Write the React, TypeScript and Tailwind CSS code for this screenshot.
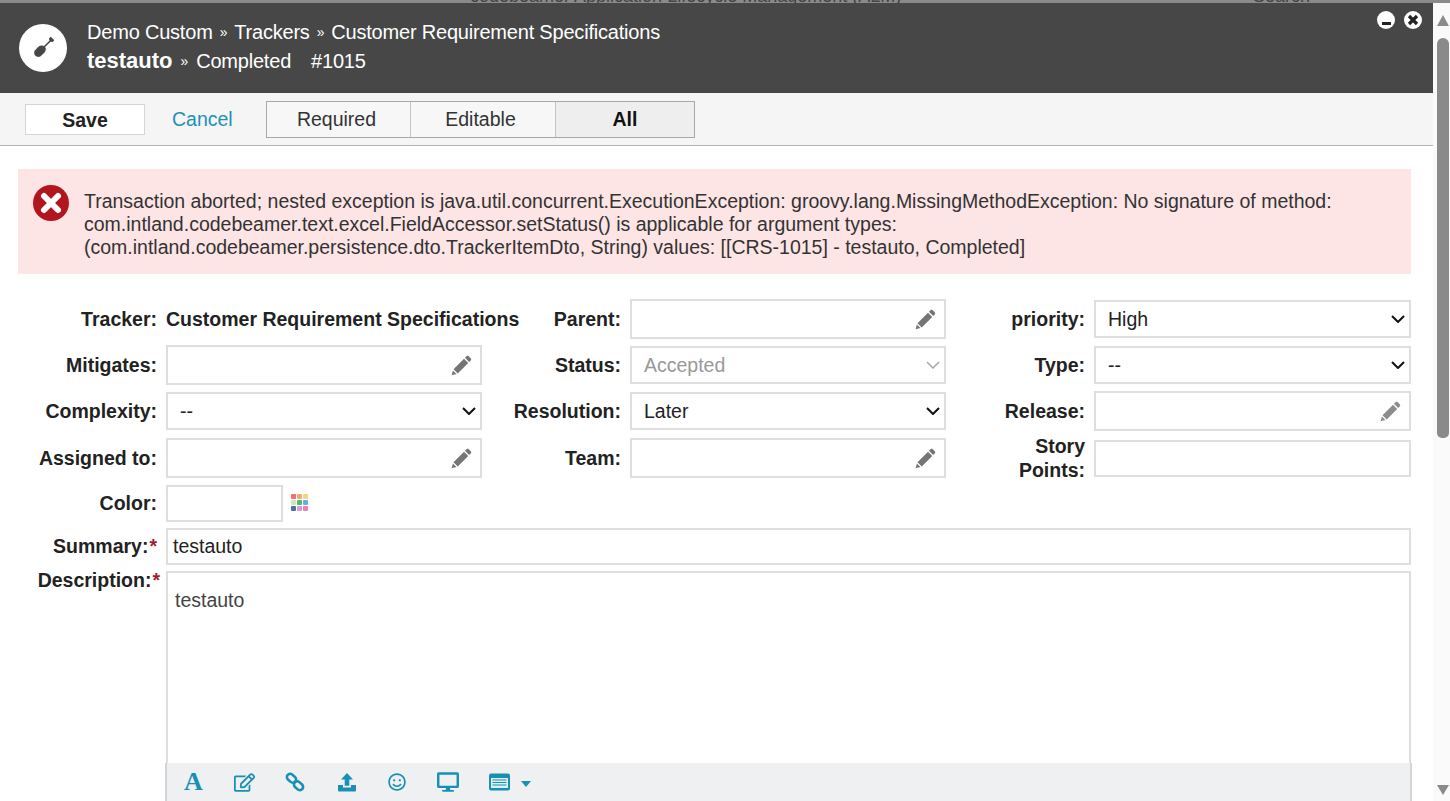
import { ReactNode } from "react";
import { FaDesktop, FaRegEdit, FaRegSmile } from "react-icons/fa";

function PencilIcon({ light }: { light?: boolean }) {
  return (
    <svg viewBox="0 0 20 20" className="h-[21px] w-[21px]">
      <path
        d="M15 1c.5-.4 1.200-.4 1.700 0l2.300 2.300c.4.5.4 1.200 0 1.700l-1.700 1.700-4-4L15 1zM12.400 3.600l4 4L6.400 17.600l-4-4 10-10zM1.800 14.800l3.400 3.400L.6 19.400l1.200-4.600z"
        fill={light ? "#8c8c8c" : "#757575"}
      />
    </svg>
  );
}

function Chevron({ muted }: { muted?: boolean }) {
  return (
    <svg viewBox="0 0 14 8" className="h-[8px] w-[14px]">
      <path d="M1 1l6 6 6-6" fill="none" stroke={muted ? "#a8a8a8" : "#111"} strokeWidth={muted ? 1.5 : 2} />
    </svg>
  );
}

function Label({ children }: { children: ReactNode }) {
  return <div className="self-center pr-[9px] text-right text-[19.5px] font-bold leading-[24px] text-[#222]">{children}</div>;
}

function RefField({ light }: { light?: boolean }) {
  return (
    <div className="flex h-[40px] items-center justify-end self-center border-2 border-[#dedede] bg-white pr-[8px]">
      <PencilIcon light={light} />
    </div>
  );
}

function SelectField({ value, muted }: { value: string; muted?: boolean }) {
  return (
    <div className="flex h-[38px] items-center justify-between self-center border-2 border-[#dedede] bg-white pl-[12px] pr-[4px]">
      <span className={muted ? "pt-[1px] text-[19.5px] text-[#999]" : "pt-[1px] text-[19.5px] text-[#222]"}>{value}</span>
      <Chevron muted={muted} />
    </div>
  );
}

function Swatches() {
  const colors = ["#ef7070", "#f2a86e", "#f2d67a", "#cfe5b8", "#4cbb6c", "#62aee8", "#4f6fa5", "#d59ae0", "#f07cbc"];
  return (
    <div className="grid grid-cols-3 gap-[1px]">
      {colors.map((color) => (
        <div key={color} className="h-[5px] w-[5px] rounded-[1px]" style={{ backgroundColor: color }} />
      ))}
    </div>
  );
}

export default function App() {
  return (
    <div className="flex h-[801px] w-[1450px] flex-col overflow-hidden bg-white font-['Liberation_Sans',Arial,sans-serif]">
      <div className="h-[3px] shrink-0 overflow-hidden bg-[#8a8a8a]">
        <div className="ml-[470px] mt-[-14px] flex justify-between pr-[140px] text-[18px] leading-[20px] text-[#444]">
          <span>codebeamer Application Lifecycle Management (ALM)</span>
          <span>Search</span>
        </div>
      </div>

      <div className="flex min-h-0 flex-1">
        <div className="flex w-[1433px] flex-col">
          <header className="flex h-[90px] shrink-0 items-start justify-between bg-[#474747] text-white">
            <div className="flex">
              <div className="ml-[19px] mt-[21px] flex h-[48px] w-[48px] items-center justify-center rounded-full bg-white">
                <svg viewBox="0 0 24 24" className="h-[34px] w-[34px]">
                  <path d="M17.500 4 20 6.500l-1.200 1.300-1.500-.3-3.800 3.800c.8 1.400.5 2.900-.6 4l-2.600 2.600c-.8.5-2.700.6-3.700-.4s-1-3-.4-3.800l2.500-2.500c1.100-1.100 2.700-1.400 4-.6l3.800-3.800-.3-1.500L17.500 4z" fill="#474747" />
                </svg>
              </div>
              <div className="ml-[20px] flex flex-col">
                <div className="mt-[16px] flex h-[26px] items-center text-[20px] leading-[26px] tracking-[-0.2px]">
                  <span>Demo Custom</span>
                  <span className="mx-[7px] text-[14px]">»</span>
                  <span>Trackers</span>
                  <span className="mx-[7px] text-[14px]">»</span>
                  <span>Customer Requirement Specifications</span>
                </div>
                <div className="mt-[2px] flex h-[28px] items-center text-[20px] leading-[28px] tracking-[-0.2px]">
                  <span className="text-[22px] font-bold tracking-normal">testauto</span>
                  <span className="mx-[8px] text-[14px]">»</span>
                  <span>Completed</span>
                  <span className="ml-[20px]">#1015</span>
                </div>
              </div>
            </div>
            <div className="mr-[11px] mt-[8px] flex gap-[9px]">
              <div className="flex h-[18px] w-[18px] items-end justify-center rounded-full bg-white pb-[4px]">
                <div className="h-[3px] w-[9px] bg-[#222]" />
              </div>
              <div className="flex h-[18px] w-[18px] items-center justify-center rounded-full bg-white">
                <svg viewBox="0 0 12 12" className="h-[12px] w-[12px]">
                  <path d="M2 2l8 8M10 2l-8 8" stroke="#222" strokeWidth="3.200" />
                </svg>
              </div>
            </div>
          </header>

          <div className="flex h-[53px] shrink-0 items-start border-b border-[#b5b5b5] bg-[#f5f5f5] pl-[25px]">
            <button className="mt-[11px] h-[31px] w-[120px] border border-[#d5d5d5] bg-white text-[19.5px] font-bold leading-[24px] text-[#222]">Save</button>
            <span className="ml-[27px] mt-[14px] w-[94px] text-[19.5px] leading-[24px] text-[#2092b4]">Cancel</span>
            <div className="mt-[8px] flex h-[37px] w-[429px] border border-[#a8a8a8] bg-white text-[19.5px] text-[#333]">
              <div className="flex w-[144px] items-center justify-center border-r border-[#c4c4c4] bg-[#f7f7f7] pr-[4px]">Required</div>
              <div className="flex w-[145px] items-center justify-center border-r border-[#c4c4c4] bg-[#f7f7f7] pr-[5px]">Editable</div>
              <div className="flex flex-1 items-center justify-center bg-[#eeeeee] font-bold text-[#111]">All</div>
            </div>
          </div>

          <div className="relative flex min-h-0 flex-1 flex-col overflow-hidden">
            <div className="ml-[18px] mt-[23px] flex h-[105px] w-[1393px] shrink-0 bg-[#fde4e5] pl-[15px]">
              <svg viewBox="0 0 36 36" className="mt-[16px] h-[36px] w-[36px] shrink-0">
                <circle cx="18" cy="18" r="18" fill="#b3151f" />
                <path d="M11 11l14 14M25 11L11 25" stroke="#fff" strokeWidth="6" strokeLinecap="round" />
              </svg>
              <p className="ml-[15px] mt-[21px] whitespace-nowrap text-[19.5px] leading-[23px] text-[#333]">
                Transaction aborted; nested exception is java.util.concurrent.ExecutionException: groovy.lang.MissingMethodException: No signature of method:
                <br />
                com.intland.codebeamer.text.excel.FieldAccessor.setStatus() is applicable for argument types:
                <br />
                (com.intland.codebeamer.persistence.dto.TrackerItemDto, String) values: [[CRS-1015] - testauto, Completed]
              </p>
            </div>

            <div className="mt-[22px] grid shrink-0 grid-cols-[166px_316px_148px_316px_148px_317px] grid-rows-[46px_46px_46px_48px]">
              <Label>Tracker:</Label>
              <div className="self-center whitespace-nowrap text-[19.5px] font-bold leading-[24px] text-[#222]">Customer Requirement Specifications</div>
              <Label>Parent:</Label>
              <RefField />
              <Label>priority:</Label>
              <SelectField value="High" />

              <Label>Mitigates:</Label>
              <RefField />
              <Label>Status:</Label>
              <SelectField value="Accepted" muted />
              <Label>Type:</Label>
              <SelectField value="--" />

              <Label>Complexity:</Label>
              <SelectField value="--" />
              <Label>Resolution:</Label>
              <SelectField value="Later" />
              <Label>Release:</Label>
              <RefField light />

              <Label>Assigned to:</Label>
              <RefField />
              <Label>Team:</Label>
              <RefField />
              <Label>
                Story
                <br />
                Points:
              </Label>
              <div className="h-[37px] self-center border-2 border-[#dedede] bg-white" />
            </div>

            <div className="mt-[3px] flex h-[37px] shrink-0">
              <div className="w-[166px] shrink-0 self-center pr-[9px] pt-[1px] text-right text-[19.5px] font-bold text-[#222]">Color:</div>
              <div className="h-[37px] w-[117px] border-2 border-[#dedede] bg-white" />
              <div className="ml-[8px] mt-[9px]">
                <Swatches />
              </div>
            </div>

            <div className="mt-[6px] flex h-[37px] shrink-0">
              <div className="w-[166px] shrink-0 self-center pr-[9px] pt-[1px] text-right text-[19.5px] font-bold text-[#222]">
                Summary:<span className="ml-[1px] text-[#a01c2c]">*</span>
              </div>
              <div className="flex h-[37px] w-[1245px] items-center border-2 border-[#dedede] bg-white pl-[5px] text-[19.5px] text-[#222]">testauto</div>
            </div>

            <div className="mt-[6px] flex min-h-0 flex-1">
              <div className="w-[166px] shrink-0 pr-[6px] text-right text-[19.5px] font-bold leading-[18px] text-[#222]">
                Description:<span className="ml-[1px] text-[#a01c2c]">*</span>
              </div>
              <div className="w-[1245px] border-2 border-b-0 border-[#dedede] bg-white pl-[7px] pt-[15px] text-[19.5px] leading-[24px] text-[#444]">testauto</div>
            </div>

            <div className="absolute bottom-0 left-[165px] flex h-[38px] w-[1247px] items-center border-x-2 border-[#d4d4d4] bg-[#eef0f1] text-[#1a8fb5]">
              <span className="ml-[16px] w-[21px] text-center font-['Liberation_Serif',serif] text-[26px] font-bold leading-[24px]">A</span>
              <FaRegEdit className="ml-[30px] h-[21px] w-[21px]" />
              <svg viewBox="0 0 20 20" className="ml-[30px] h-[20px] w-[20px]" fill="none" stroke="currentColor" strokeWidth="2.600">
                <rect x="1.500" y="3" width="10" height="6.500" rx="3.200" transform="rotate(42 6.500 6.200)" />
                <rect x="8.500" y="10.500" width="10" height="6.500" rx="3.200" transform="rotate(42 13.500 13.800)" />
              </svg>
              <svg viewBox="0 0 20 20" className="ml-[32px] h-[20px] w-[20px]" fill="currentColor">
                <path d="M10 1l6 6.500h-3.700v6.200H7.700V7.500H4zM1 13h5v2.500h8V13h5v5.500a1 1 0 0 1-1 1H2a1 1 0 0 1-1-1z" />
              </svg>
              <FaRegSmile className="ml-[31px] h-[18px] w-[18px]" />
              <FaDesktop className="ml-[31px] h-[22px] w-[22px]" />
              <svg viewBox="0 0 21 18" className="ml-[30px] h-[18px] w-[21px]">
                <rect width="21" height="17" y="0.500" rx="2" fill="currentColor" />
                <rect x="2" y="5" width="17" height="10" fill="#dff0f6" />
                <path d="M3.500 7h14M3.500 9.500h14M3.500 12h14" stroke="currentColor" strokeWidth="1.200" />
              </svg>
              <div className="ml-[11px] mt-[3px] h-0 w-0 border-x-[5.500px] border-t-[6px] border-x-transparent border-t-[#1a8fb5]" />
            </div>
          </div>
        </div>

        <div className="flex w-[17px] shrink-0 flex-col bg-[#fafafa] pl-[4px]">
          <div className="mt-[12px] h-0 w-0 border-x-[6.500px] border-b-[11px] border-x-transparent border-b-[#8a8a8a]" />
          <div className="mt-[12px] h-[400px] w-[12px] rounded-b-[5px] rounded-t-[6px] bg-[#8a8a8a]" />
          <div className="mt-[347px] h-0 w-0 border-x-[6.500px] border-t-[10px] border-x-transparent border-t-[#8a8a8a]" />
        </div>
      </div>
    </div>
  );
}
